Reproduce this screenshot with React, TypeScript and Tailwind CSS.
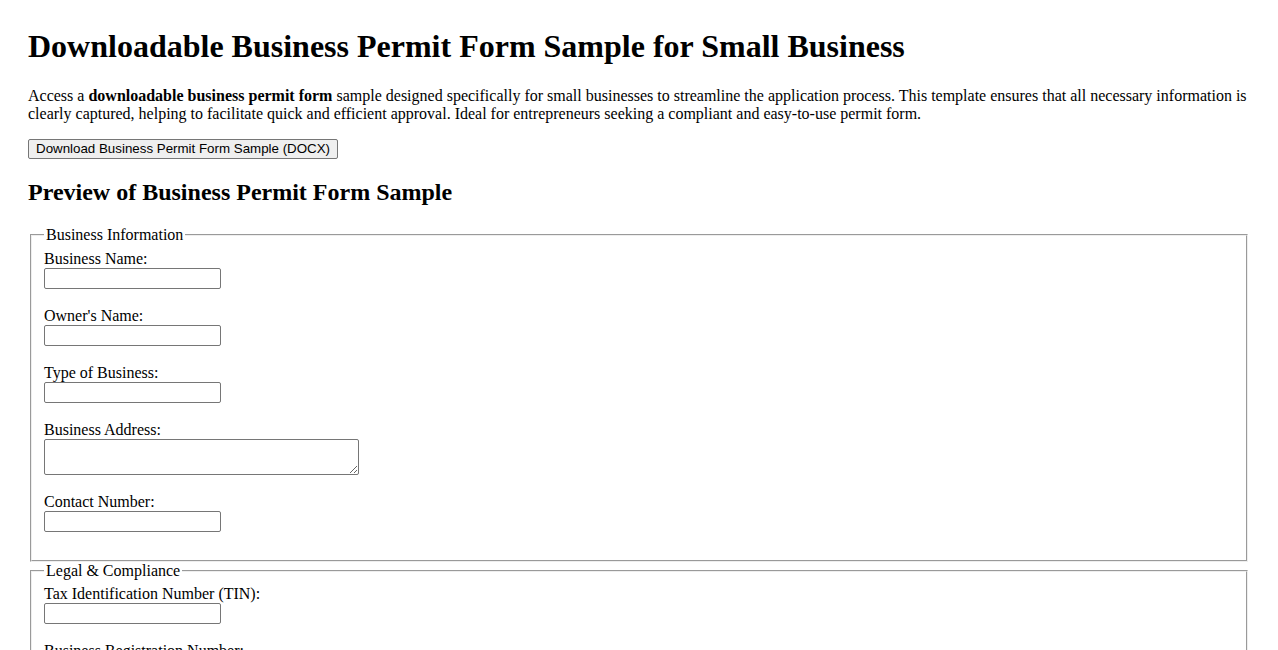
const businessFields = [
  { label: "Business Name:", kind: "input" },
  { label: "Owner's Name:", kind: "input" },
  { label: "Type of Business:", kind: "input" },
  { label: "Business Address:", kind: "textarea" },
  { label: "Contact Number:", kind: "input" },
];

const legalFields = [
  { label: "Tax Identification Number (TIN):", kind: "input" },
  { label: "Business Registration Number:", kind: "input" },
  { label: "Permit Type:", kind: "input" },
];

type Field = { label: string; kind: string };

function FormField({ field }: { field: Field }) {
  return (
    <div className="mb-[18px] flex flex-col items-start">
      <label className="block leading-[18px]">{field.label}</label>
      {field.kind === "textarea" ? (
        <textarea
          rows={2}
          className="block h-[36px] w-[315px] resize rounded-[2px] border border-[#767676] bg-white px-[2px] py-[1px] font-['Liberation_Mono',monospace] text-[13.33px]"
        />
      ) : (
        <input
          type="text"
          className="block h-[21px] w-[177px] rounded-[2px] border border-[#767676] bg-white px-[2px] py-[1px] font-['Liberation_Sans',Arial,sans-serif] text-[13.33px]"
        />
      )}
    </div>
  );
}

function Section({ title, fields }: { title: string; fields: Field[] }) {
  return (
    <fieldset className="mx-[2px] min-w-0 border-2 border-[#eeeeee] px-[12px] pt-[5.6px] pb-[10px] [border-style:groove]">
      <legend className="px-[2px] leading-[18px]">{title}</legend>
      {fields.map((field) => (
        <FormField key={field.label} field={field} />
      ))}
    </fieldset>
  );
}

export default function App() {
  return (
    <div className="min-h-screen bg-white px-[28px] pt-[28px] pb-[28px] font-['Liberation_Serif','Times_New_Roman',serif] text-[16px] leading-[18px] text-black">
      <h1 className="text-[32px] font-bold leading-[37px]">
        Downloadable Business Permit Form Sample for Small Business
      </h1>
      <p className="mt-[22px]">
        Access a <strong className="font-bold">downloadable business permit form</strong> sample
        designed specifically for small businesses to streamline the application process. This
        template ensures that all necessary information is clearly captured, helping to facilitate
        quick and efficient approval. Ideal for entrepreneurs seeking a compliant and easy-to-use
        permit form.
      </p>
      <div className="mt-[16px] flex">
        <button
          type="button"
          className="h-[20px] rounded-[2px] border border-[#767676] bg-[#efefef] px-[7px] font-['Liberation_Sans',Arial,sans-serif] text-[13.33px] leading-[16px] text-black"
        >
          Download Business Permit Form Sample (DOCX)
        </button>
      </div>
      <h2 className="mt-[19px] text-[24px] font-bold leading-[28px]">
        Preview of Business Permit Form Sample
      </h2>
      <form className="mt-[20px]">
        <Section title="Business Information" fields={businessFields} />
        <Section title="Legal &amp; Compliance" fields={legalFields} />
      </form>
    </div>
  );
}
